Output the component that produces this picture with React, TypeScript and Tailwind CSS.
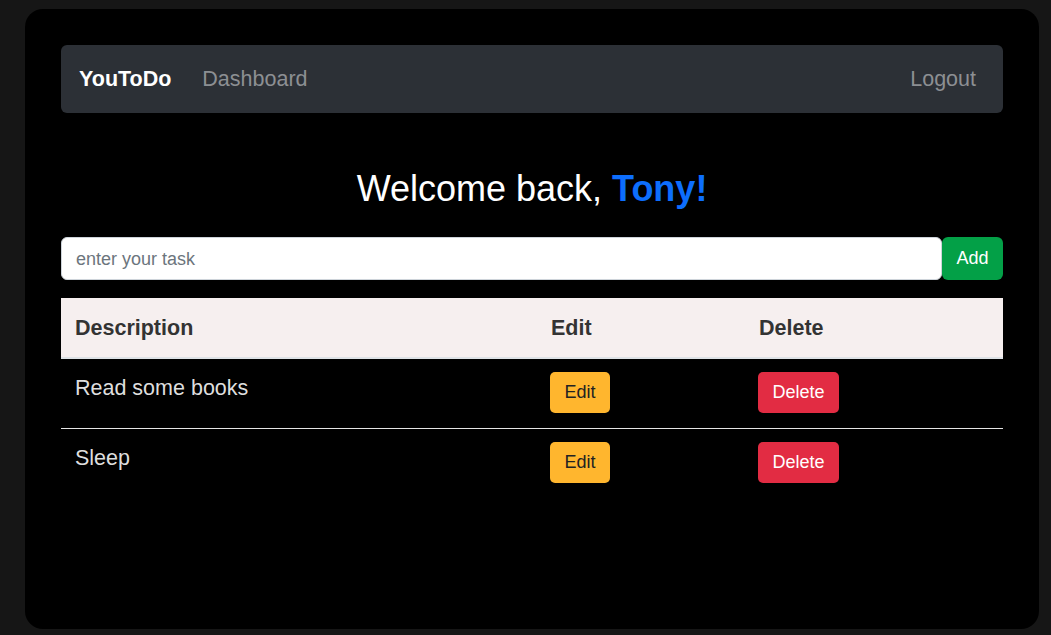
import { useState } from "react";

type Task = { id: number; description: string };

const initialTasks: Task[] = [
  { id: 1, description: "Read some books" },
  { id: 2, description: "Sleep" },
];

export default function App() {
  const [tasks, setTasks] = useState<Task[]>(initialTasks);
  const [text, setText] = useState("");

  function addTask() {
    if (!text.trim()) return;
    setTasks([...tasks, { id: Date.now(), description: text.trim() }]);
    setText("");
  }

  return (
    <div className="min-h-screen w-full bg-[#161616] pl-[25px] pr-[12px] pt-[9px] pb-[6px] font-['Liberation_Sans',Arial,sans-serif]">
      <div className="h-[620px] w-[1014px] rounded-[18px] bg-black px-[36px] pt-[36px]">
        {/* Navbar */}
        <nav className="flex h-[68px] items-center rounded-[6px] bg-[#2c3036] pl-[18px] pr-[27px] text-[21.5px]">
          <span className="font-bold text-white">YouToDo</span>
          <a className="ml-[31px] text-[#8c8f93]">Dashboard</a>
          <a className="ml-auto text-[#8c8f93]">Logout</a>
        </nav>

        {/* Greeting */}
        <h1 className="mt-[54px] text-center text-[36px] leading-[43px] text-white">
          Welcome back, <span className="font-bold text-[#0d6efd]">Tony!</span>
        </h1>

        {/* Input */}
        <div className="mt-[27px] flex h-[43px]">
          <input
            value={text}
            onChange={(e) => setText(e.target.value)}
            placeholder="enter your task"
            className="h-full flex-1 rounded-[6px] border border-[#ced4da] bg-white px-[14px] pt-[1px] text-[18px] text-[#212529] placeholder-[#6c757d] outline-none"
          />
          <button
            onClick={addTask}
            className="h-full w-[61px] rounded-[6px] bg-[#03a047] text-[18px] text-white"
          >
            Add
          </button>
        </div>

        {/* Table */}
        <div className="mt-[18px]">
          <div className="grid grid-cols-[476px_208px_258px] border-b-2 border-[#dee2e6] bg-[#f6efef] text-[21.5px] font-bold leading-[32px] text-[#333333]">
            <div className="px-[14px] pt-[14px] pb-[13px]">Description</div>
            <div className="px-[14px] pt-[14px] pb-[13px]">Edit</div>
            <div className="px-[14px] pt-[14px] pb-[13px]">Delete</div>
          </div>
          {tasks.map((task, i) => (
            <div
              key={task.id}
              className={
                "grid grid-cols-[476px_208px_258px] " +
                (i < tasks.length - 1 ? "border-b border-[#e5e5e5]" : "")
              }
            >
              <div className="px-[14px] pt-[13px] text-[21.5px] leading-[32px] text-[#dedede]">
                {task.description}
              </div>
              <div className="px-[13px] pt-[13px] pb-[15px]">
                <button className="h-[41px] w-[60px] rounded-[5px] bg-[#ffb62e] text-[18px] text-[#222]">
                  Edit
                </button>
              </div>
              <div className="px-[13px] pt-[13px] pb-[15px]">
                <button
                  onClick={() => setTasks(tasks.filter((t) => t.id !== task.id))}
                  className="h-[41px] w-[81px] rounded-[5px] bg-[#e22c43] text-[18px] text-white"
                >
                  Delete
                </button>
              </div>
            </div>
          ))}
        </div>
      </div>
    </div>
  );
}
